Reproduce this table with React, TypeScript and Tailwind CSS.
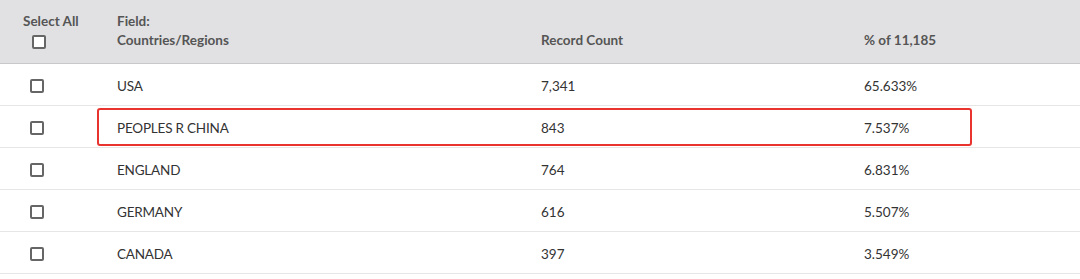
import React from "react";

const rows = [
  { name: "USA", count: "7,341", pct: "65.633%" },
  { name: "PEOPLES R CHINA", count: "843", pct: "7.537%", marked: true },
  { name: "ENGLAND", count: "764", pct: "6.831%" },
  { name: "GERMANY", count: "616", pct: "5.507%" },
  { name: "CANADA", count: "397", pct: "3.549%" },
];

const Box = () => (
  <span className="block w-[14px] h-[14px] border-2 border-[#666] rounded-[2px] bg-white" />
);

export default function App() {
  return (
    <div
      className="w-[1080px] h-[279px] bg-white text-[13.5px] text-[#333]"
      style={{ fontFamily: "Lato, 'Open Sans', sans-serif" }}
    >
      <div className="grid grid-cols-[117px_424px_323px_1fr] h-[64px] bg-[#e1e1e3] border-b border-[#c8c8ca] font-bold text-[#555]">
        <div className="pl-[23px] pt-[12px]">
          <div className="leading-[18px]">Select All</div>
          <div className="ml-[9px] mt-[5px]">
            <Box />
          </div>
        </div>
        <div className="pt-[12px] leading-[19px]">
          <div>Field:</div>
          <div>Countries/Regions</div>
        </div>
        <div className="pt-[31px] leading-[19px]">Record Count</div>
        <div className="pt-[31px] leading-[19px]">% of 11,185</div>
      </div>
      {rows.map((r, i) => (
        <div
          key={i}
          className="relative grid grid-cols-[117px_424px_323px_1fr] items-center h-[42px] border-b border-[#e6e6e6]"
        >
          <div className="pl-[30px] pt-[3px]">
            <Box />
          </div>
          <div className="pt-[3px] tracking-[-0.2px]">{r.name}</div>
          <div className="pt-[3px]">{r.count}</div>
          <div className="pt-[3px]">{r.pct}</div>
          {r.marked && (
            <div className="absolute left-[97px] top-[2px] w-[875px] h-[38px] border-2 border-[#e8332f] rounded-[3px] pointer-events-none" />
          )}
        </div>
      ))}
    </div>
  );
}
